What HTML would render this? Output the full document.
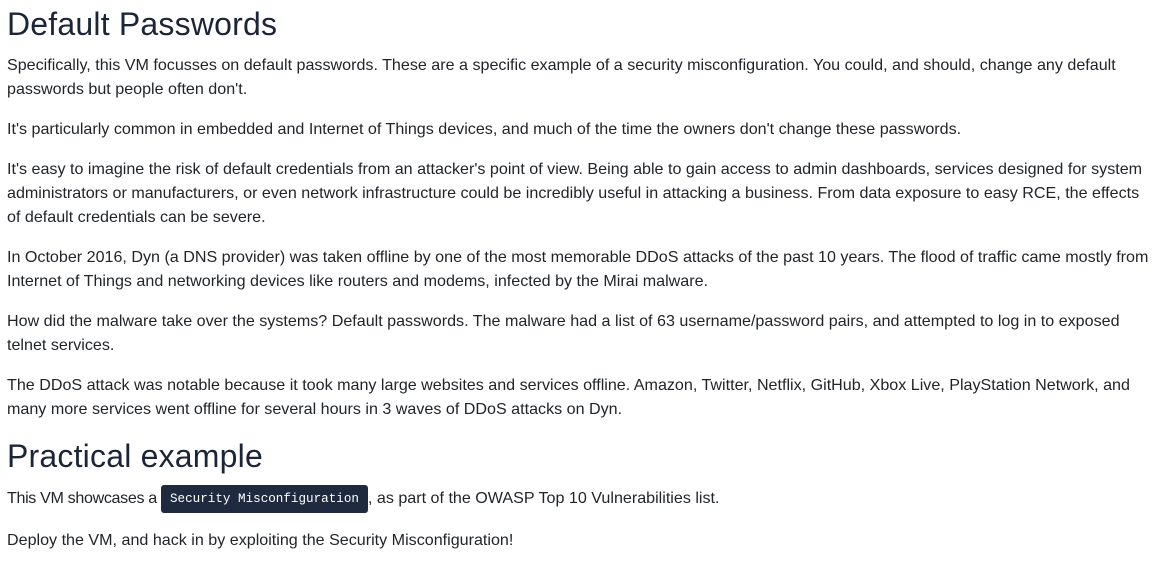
<!DOCTYPE html>
<html><head><meta charset="utf-8"><style>
html,body{margin:0;padding:0;background:#fff;width:1170px;height:561px;overflow:hidden}
body{font-family:"Liberation Sans",sans-serif;color:#212529;position:relative}
h1,h2{margin:0;font-weight:400;color:#1c2538;font-size:32px;line-height:40px;position:absolute;left:7px;letter-spacing:0.2px}
p{margin:0;font-size:16.1px;line-height:24px;position:absolute;left:7px;white-space:nowrap}
code{font-family:"Liberation Mono",monospace;font-size:12.6px;background:#1f2a3f;color:#fff;border-radius:3px;padding:6px 9px;display:inline-block;line-height:16px;vertical-align:1px;letter-spacing:0}
</style></head><body>
<h1 style="top:4px">Default Passwords</h1>
<p style="top:53px">Specifically, this VM focusses on default passwords. These are a specific example of a security misconfiguration. You could, and should, change any default<br>passwords but people often don't.</p>
<p style="top:117px">It's particularly common in embedded and Internet of Things devices, and much of the time the owners don't change these passwords.</p>
<p style="top:157px">It's easy to imagine the risk of default credentials from an attacker's point of view. Being able to gain access to admin dashboards, services designed for system<br>administrators or manufacturers, or even network infrastructure could be incredibly useful in attacking a business. From data exposure to easy RCE, the effects<br>of default credentials can be severe.</p>
<p style="top:245px">In October 2016, Dyn (a DNS provider) was taken offline by one of the most memorable DDoS attacks of the past 10 years. The flood of traffic came mostly from<br>Internet of Things and networking devices like routers and modems, infected by the Mirai malware.</p>
<p style="top:309px">How did the malware take over the systems? Default passwords. The malware had a list of 63 username/password pairs, and attempted to log in to exposed<br>telnet services.</p>
<p style="top:373px">The DDoS attack was notable because it took many large websites and services offline. Amazon, Twitter, Netflix, GitHub, Xbox Live, PlayStation Network, and<br>many more services went offline for several hours in 3 waves of DDoS attacks on Dyn.</p>
<h2 style="top:436px">Practical example</h2>
<p style="top:485px"><span style="letter-spacing:-0.35px">This VM showcases a </span><code>Security Misconfiguration</code>, as part of the OWASP Top 10 Vulnerabilities list.</p>
<p style="top:528px">Deploy the VM, and hack in by exploiting the Security Misconfiguration!</p>
</body></html>
